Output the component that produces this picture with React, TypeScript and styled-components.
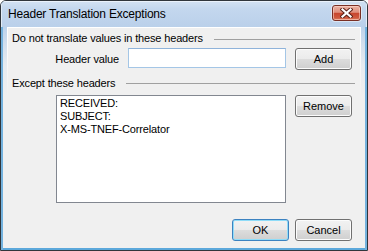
import React from 'react'
import styled, { createGlobalStyle } from 'styled-components'

const GlobalStyle = createGlobalStyle`
    html, body {
        margin: 0;
        padding: 0;
        background: #ffffff;
    }
`;

const Window = styled.div`
    box-sizing: border-box;
    width: 368px;
    height: 251px;
    display: flex;
    flex-direction: column;
    border: 1px solid #30363c;
    border-radius: 6px 6px 0 0;
    overflow: hidden;
    background: linear-gradient(180deg, #bcd2eb 0px, #bcd2eb 26px, #d3dfed 44px, #e6ebf0 64px, #f0f0f0 96px, #f0f0f0 100%);
    box-shadow: inset 2px 0 0 #74b2de, inset -2px 0 0 #74b2de, inset 0 -2px 0 #5ca8db;
    font-family: "Liberation Sans", Arial, sans-serif;
    color: #000000;
`;

const TitleBar = styled.div`
    height: 26px;
    flex: none;
    display: flex;
    align-items: flex-start;
    background: linear-gradient(180deg, #d3e2f3 0px, #c3d7ee 8px, #bad0ea 100%);
    box-shadow: inset 0 1px 0 #eaf2fb, inset 1px 0 0 #e2ecf7, inset -1px 0 0 #e2ecf7;
`;

const Title = styled.div`
    flex: 1;
    padding-left: 7px;
    line-height: 26px;
    font-size: 12px;
    letter-spacing: -0.2px;
`;

const CloseButton = styled.div`
    box-sizing: border-box;
    width: 29px;
    height: 16px;
    margin: 4px 6px 0 0;
    border: 1px solid #7a2f24;
    border-radius: 3px;
    background: linear-gradient(180deg, #eab2a4 0%, #df8f7c 45%, #c8462e 52%, #cf5a3e 85%, #e0866a 100%);
    box-shadow: inset 0 0 0 1px rgba(255, 220, 210, 0.55), 0 0 0 1px rgba(255, 255, 255, 0.45);
    display: flex;
    align-items: center;
    justify-content: center;
`;

const Frame = styled.div`
    flex: 1;
    display: flex;
    padding: 0 6px 2px 6px;
`;

const Client = styled.div`
    flex: 1;
    display: flex;
    flex-direction: column;
    box-sizing: border-box;
    background: #f0f0f0;
    border: 1px solid transparent;
    border-bottom-width: 0;
    border-image: linear-gradient(180deg, #ffffff 0px, rgba(255, 255, 255, 0.6) 30px, rgba(240, 240, 240, 0) 70px) 1;
    font-size: 11px;
    letter-spacing: -0.15px;
`;

const GroupHeader = styled.div<{ $top: number; $lineTop: number }>`
    display: flex;
    align-items: flex-start;
    margin-top: ${p => p.$top}px;
    padding-left: 4px;
    height: 13px;
    line-height: 13px;

    &::after {
        content: "";
        flex: 1;
        height: 1px;
        background: #a0a0a0;
        margin: ${p => p.$lineTop}px 5px 0 11px;
    }
`;

const Row = styled.div<{ $top: number; $lead: number; $main: number }>`
    display: grid;
    grid-template-columns: ${p => p.$lead}px ${p => p.$main}px 57px;
    column-gap: 9px;
    align-items: start;
    margin-top: ${p => p.$top}px;
`;

const FieldLabel = styled.label`
    align-self: center;
    text-align: right;
    line-height: 13px;
`;

const TextBox = styled.input`
    box-sizing: border-box;
    height: 20px;
    margin: 0;
    padding: 0 3px;
    border: 1px solid #a4c6e6;
    border-top-color: #8fb3da;
    background: #ffffff;
    font: inherit;
    outline: none;
`;

const ListBox = styled.div`
    grid-column: 2;
    box-sizing: border-box;
    height: 108px;
    padding: 1px 3px;
    border: 1px solid #828790;
    background: #ffffff;
    line-height: 13px;
    white-space: nowrap;
`;

const Button = styled.button<{ $default?: boolean }>`
    box-sizing: border-box;
    width: 57px;
    height: 22px;
    margin: 0;
    padding: 0;
    border: 1px solid ${p => (p.$default ? '#3c82c0' : '#707070')};
    border-radius: 3px;
    background: linear-gradient(180deg, #f2f2f2 0%, #ebebeb 50%, #dddddd 50%, #cfcfcf 100%);
    box-shadow: inset 0 0 0 1px ${p => (p.$default ? '#8fdcf8' : '#fcfcfc')};
    font-family: "Liberation Sans", Arial, sans-serif;
    font-size: 11px;
    color: #000000;
    line-height: 13px;
`;

const RemoveButton = styled(Button)`
    grid-column: 3;
`;

const Footer = styled.div`
    display: flex;
    justify-content: flex-end;
    gap: 6px;
    margin-top: 16px;
    padding-right: 8px;
`;

const CloseGlyph: React.FC = () => (
    <svg width="13" height="10" viewBox="0 0 13 10">
        <path d="M2.5 1.5 L10.5 8.5 M10.5 1.5 L2.5 8.5" stroke="#5b2219" strokeWidth="4.2" strokeLinecap="square" fill="none" />
        <path d="M2.5 1.5 L10.5 8.5 M10.5 1.5 L2.5 8.5" stroke="#ffffff" strokeWidth="2.2" strokeLinecap="square" fill="none" />
    </svg>
);

const headers = ['RECEIVED:', 'SUBJECT:', 'X-MS-TNEF-Correlator'];

const App: React.FC = () => {
    const [value, setValue] = React.useState('');

    return (
        <>
            <GlobalStyle />
            <Window>
                <TitleBar>
                    <Title>Header Translation Exceptions</Title>
                    <CloseButton>
                        <CloseGlyph />
                    </CloseButton>
                </TitleBar>
                <Frame>
                    <Client>
                        <GroupHeader $top={4} $lineTop={7}>Do not translate values in these headers</GroupHeader>
                        <Row $top={3} $lead={111} $main={158}>
                            <FieldLabel>Header value</FieldLabel>
                            <TextBox value={value} type="text" onChange={e => setValue(e.target.value)} />
                            <Button>Add</Button>
                        </Row>
                        <GroupHeader $top={7} $lineTop={6}>Except these headers</GroupHeader>
                        <Row $top={5} $lead={39} $main={230}>
                            <ListBox>
                                {headers.map(h => (
                                    <div key={h}>{h}</div>
                                ))}
                            </ListBox>
                            <RemoveButton>Remove</RemoveButton>
                        </Row>
                        <Footer>
                            <Button $default>OK</Button>
                            <Button>Cancel</Button>
                        </Footer>
                    </Client>
                </Frame>
            </Window>
        </>
    );
};

export default App;
